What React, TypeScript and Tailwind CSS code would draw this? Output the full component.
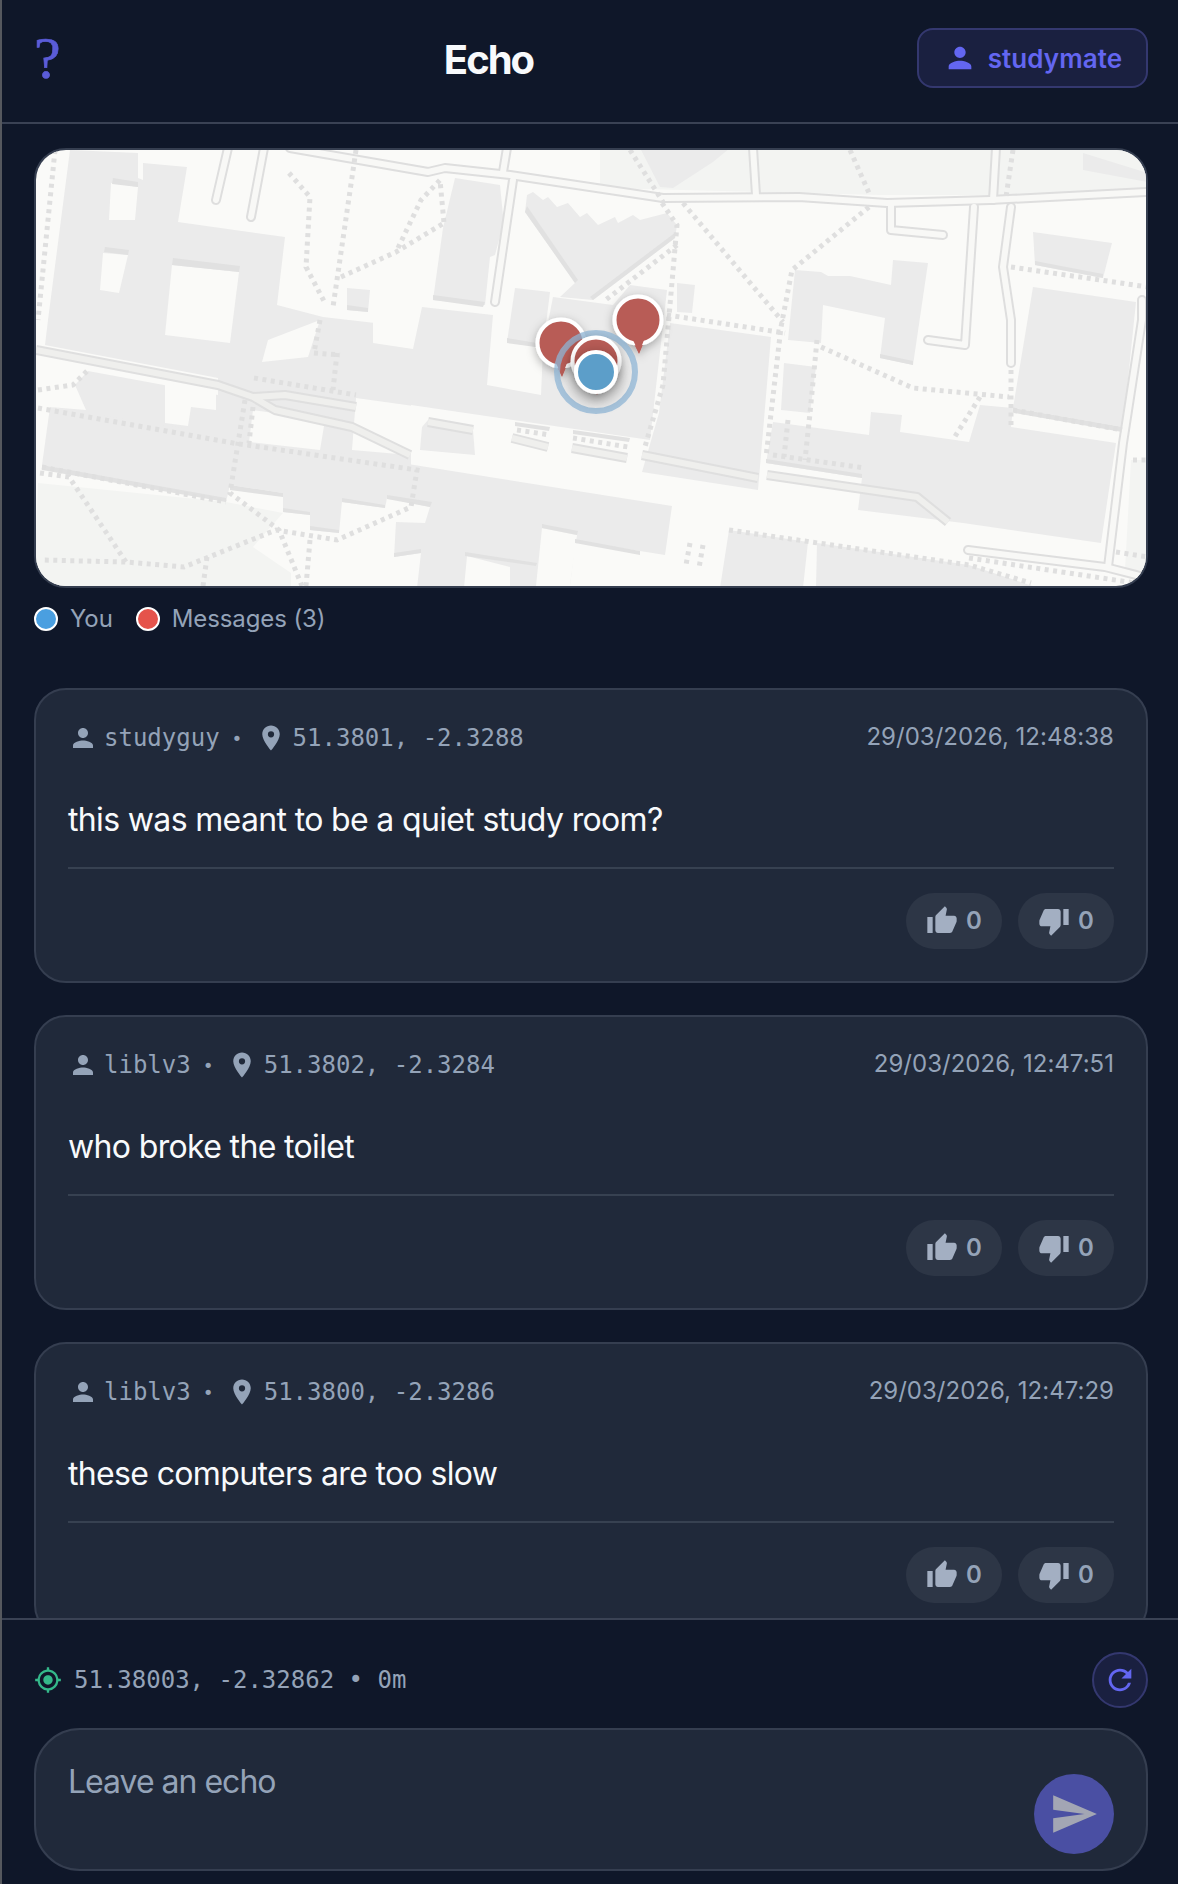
import React from "react";
import { MdPerson, MdLocationOn, MdThumbUp, MdThumbDown, MdMyLocation, MdRefresh, MdSend } from "react-icons/md";

const parks = [
  "38,483 226,502 283,513 253,547 291,573 291,588 34,588",
  "600,148 1148,148 1148,195 880,195 600,188",
  "1131,460 1148,460 1148,570 1125,570",
];
const buildings = [
  "70,150 138,153 138,178 143,180 143,163 187,167 178,222 285,237 277,305 323,317 375,323 373,343 413,349 422,307 493,315 487,385 541,395 543,348 553,297 613,305 630,285 667,290 650,440 411,405 411,468 218,440 218,378 45,345 48,320",
  "75,385 88,371 218,395 218,440 50,407 86,410",
  "50,407 672,506 665,555 577,541 570,586 510,588 510,567 467,556 464,588 417,588 421,553 394,557 396,522 425,523 430,507 387,498 385,508 342,502 339,533 310,530 310,515 283,512 283,493 230,485 226,502 42,465",
  "455,178 500,185 503,215 505,217 495,255 490,257 485,305 433,300 443,228",
  "527,195 533,192 543,200 548,197 557,207 568,203 580,217 587,213 598,225 615,217 618,223 633,215 640,220 667,213 677,225 675,238 593,300 560,297 575,283 525,212",
  "507,342 515,288 550,292 543,348",
  "347,288 370,290 368,312 347,310",
  "677,283 695,285 692,313 677,312",
  "640,148 730,148 713,162 673,188 660,187",
  "670,323 771,337 758,490 642,472 659,413",
  "795,270 821,272 828,276 850,276 891,285 893,260 928,263 913,365 880,358 885,318 823,305 821,343 788,340",
  "784,363 816,367 810,413 781,410",
  "773,422 869,435 871,412 902,415 900,432 969,442 980,405 1013,408 1011,427 1116,443 1101,543 963,523 858,510 862,478 766,463",
  "1033,287 1136,302 1123,427 1013,408",
  "1033,232 1112,243 1103,278 1035,265",
  "1083,153 1148,173 1148,182 1083,170",
  "729,530 808,542 803,588 720,588",
  "817,543 969,565 1039,588 816,588",
  "428,420 473,430 475,455 420,450 422,427",
];
const holes = [
  "111,183 138,187 135,220 109,220",
  "103,253 128,255 119,293 100,290",
  "172,265 239,272 230,343 165,335",
  "268,340 320,320 308,357 262,362",
  "373,320 417,322 411,348 373,342",
  "165,383 216,393 216,410 191,407 188,426 165,423",
  "253,410 325,420 320,450 249,442",
  "356,398 428,408 410,455 352,450",
  "86,355 218,382 218,388 90,364",
  "542,528 577,535 570,586 536,586",
  "575,543 640,555 635,588 570,588",
];
const strips = [
  "113,178 138,182 138,187 112,184",
  "105,247 129,250 128,255 104,252",
  "173,258 240,266 239,272 172,265",
  "433,295 485,302 483,307 433,300",
  "347,305 368,308 368,312 347,310",
  "507,338 543,344 543,348 507,343",
  "42,465 226,498 226,502 42,470",
  "230,485 283,493 283,497 230,490",
  "283,508 310,512 310,515 283,512",
  "310,526 339,530 339,533 310,530",
  "342,498 385,505 385,508 342,502",
  "387,495 432,502 430,507 387,499",
  "394,553 421,549 421,553 394,557",
  "465,552 537,563 536,566 465,556",
  "542,524 578,531 577,535 542,528",
  "575,539 640,551 640,555 575,543",
  "515,422 550,427 549,431 515,426",
  "573,430 630,438 629,442 573,434",
  "593,300 675,238 676,232 590,297",
  "525,212 575,283 578,280 527,206",
  "880,354 913,361 913,365 880,358",
  "1013,408 1123,427 1122,432 1014,413",
  "1035,261 1103,274 1103,278 1035,265",
  "766,459 862,474 862,478 766,463",
];
const roads = [
  "290,148 428,172 445,168 510,175 663,198 799,197 887,203 990,200 1148,192",
  "507,148 503,172",
  "513,180 495,302",
  "753,148 756,195",
  "996,148 993,200",
  "891,204 891,230 943,235",
  "974,207 965,345 928,340",
  "1011,207 1003,267 1011,320 1011,363",
  "1142,300 1142,320 1123,443 1108,567",
  "968,550 1105,567 1148,578",
  "228,148 216,200",
  "264,148 251,217",
];
const greyRoads = [
  "36,350 218,385 253,397 275,410 352,427 410,455",
  "253,397 285,395 356,407",
  "642,455 758,478",
  "767,475 917,497 948,522",
  "428,422 473,430",
  "512,438 548,447",
  "572,448 627,458",
];
const dots = [
  "55,150 38,320",
  "289,173 310,197 306,267 325,303",
  "356,150 333,307",
  "341,277 396,252 444,223",
  "398,248 421,200 440,180 444,223",
  "683,203 783,322",
  "662,203 677,225 663,385 644,450",
  "630,150 663,202",
  "677,245 603,302",
  "667,315 785,333",
  "850,150 869,193",
  "869,207 792,270 781,327 766,457",
  "817,340 810,413 805,460",
  "788,420 784,457",
  "773,455 865,468",
  "821,347 913,388 1009,397",
  "980,397 954,438",
  "1011,370 1011,427",
  "1013,410 1122,430",
  "1013,150 1006,197",
  "1011,267 1148,287",
  "729,530 866,550 969,565 1031,583",
  "969,558 1148,585",
  "1116,552 1148,557",
  "1133,460 1148,460",
  "38,408 233,443 417,470 411,507 337,540 276,530 184,567 126,562 42,560",
  "40,473 69,477 126,562",
  "245,400 230,493 279,530 302,586",
  "254,378 356,395",
  "337,353 333,390",
  "314,353 340,355",
  "320,320 314,353",
  "38,390 73,385 88,370",
  "310,540 306,586",
  "207,557 203,586",
  "42,467 226,502",
  "253,407 249,443",
  "690,543 686,565",
  "703,545 699,568",
  "517,430 550,435",
  "573,438 628,447",
];

function Pin({ x, y }: { x: number; y: number }) {
  return (
    <g filter="url(#pinShadow)">
      <path d={`M${x - 6} ${y + 20} L${x + 1} ${y + 34} L${x + 7} ${y + 20} Z`} fill="#b85c57" />
      <circle cx={x} cy={y} r={23.5} fill="#b85c57" stroke="#ffffff" strokeWidth={4} />
      <path d={`M${x - 5} ${y + 20} L${x + 1} ${y + 33} L${x + 6} ${y + 20} Z`} fill="#b85c57" />
    </g>
  );
}

function MapArt() {
  return (
    <svg viewBox="36 150 1110 436" preserveAspectRatio="none" className="block h-full w-full">
      <defs>
        <filter id="pinShadow" x="-60%" y="-60%" width="220%" height="220%">
          <feDropShadow dx="0" dy="3" stdDeviation="5" floodColor="#000000" floodOpacity="0.3" />
        </filter>
        <filter id="userShadow" x="-100%" y="-100%" width="300%" height="300%">
          <feDropShadow dx="0" dy="5" stdDeviation="8" floodColor="#000000" floodOpacity="0.45" />
        </filter>
      </defs>
      <rect x="30" y="140" width="1130" height="460" fill="#fafaf8" />
      {parks.map((p) => <polygon key={p} points={p} fill="#f3f4f2" />)}
      {buildings.map((p) => <polygon key={p} points={p} fill="#ebebeb" />)}
      {holes.map((p) => <polygon key={p} points={p} fill="#fafaf8" />)}
      {strips.map((p) => <polygon key={p} points={p} fill="#e1e1e1" />)}
      {greyRoads.map((p) => <polyline key={p} points={p} fill="none" stroke="#dfdfdf" strokeWidth={10} strokeLinejoin="round" />)}
      {greyRoads.map((p) => <polyline key={p + "i"} points={p} fill="none" stroke="#efefed" strokeWidth={6} strokeLinejoin="round" />)}
      {roads.map((p) => <polyline key={p} points={p} fill="none" stroke="#dedede" strokeWidth={10} strokeLinecap="round" strokeLinejoin="round" />)}
      {roads.map((p) => <polyline key={p + "i"} points={p} fill="none" stroke="#f8f8f6" strokeWidth={6} strokeLinecap="round" strokeLinejoin="round" />)}
      {dots.map((p) => <polyline key={p} points={p} fill="none" stroke="#dfdfdf" strokeWidth={5} strokeDasharray="4 4.5" />)}
      <Pin x={638} y={320} />
      <Pin x={561} y={343} />
      <circle cx={596} cy={372} r={39} fill="none" stroke="#8fb6d6" strokeOpacity={0.75} strokeWidth={6} />
      <Pin x={596} y={361} />
      <circle cx={596} cy={372} r={20} fill="#5b9ec9" stroke="#ffffff" strokeWidth={4} filter="url(#userShadow)" />
    </svg>
  );
}

const mono = "font-['DejaVu_Sans_Mono','Liberation_Mono',monospace]";

function Card({ user, lat, time, text, last }: { user: string; lat: string; time: string; text: string; last?: boolean }) {
  return (
    <div className={`h-[295px] shrink-0 rounded-[32px] border-2 border-[#353e50] bg-[#20293a] px-[32px] pt-[32px] ${last ? "" : "mb-[32px]"}`}>
      <div className="flex h-[30px] items-center justify-between text-[#94a3b8]">
        <div className={`flex items-center pt-[2px] text-[24px] ${mono}`}>
          <MdPerson className="mr-[6px] size-[30px]" />
          <span>{user}</span>
          <span className="ml-[12px] w-[11px] text-[18px]">•</span>
          <MdLocationOn className="ml-[13px] mr-[7px] size-[30px]" />
          <span>{lat}</span>
        </div>
        <span className="text-[24px] tracking-[0.02px]">{time}</span>
      </div>
      <p className="mt-[44px] h-[48px] text-[32px] leading-[48px] tracking-[-0.65px] text-[#f8fafc]">{text}</p>
      <div className="mt-[23px] flex justify-end gap-[16px] border-t-2 border-[#374151] pt-[24px]">
        <div className="flex h-[56px] w-[96px] items-center justify-center gap-[8px] rounded-full bg-[#2d3646] text-[24px] font-semibold text-[#94a3b8]">
          <MdThumbUp className="size-[32px] text-[#a3afc2]" />
          <span>0</span>
        </div>
        <div className="flex h-[56px] w-[96px] items-center justify-center gap-[8px] rounded-full bg-[#2d3646] text-[24px] font-semibold text-[#94a3b8]">
          <MdThumbDown className="size-[32px] text-[#a3afc2]" />
          <span>0</span>
        </div>
      </div>
    </div>
  );
}

export default function App() {
  return (
    <div className="flex h-[1884px] w-[1178px] flex-col overflow-hidden border-l-2 border-[#55585e] bg-[#0f1729] font-['Inter','Liberation_Sans',sans-serif]">
      <header className="flex h-[124px] shrink-0 items-center justify-between border-b-2 border-[#3a4254] pl-[32px] pr-[30px]">
        <span className="relative top-[-3px] w-[24px] font-['Liberation_Serif',serif] text-[60px] leading-none text-[#5a5cd8] [-webkit-text-stroke:0.7px_#5a5cd8]">?</span>
        <h1 className="relative left-[1px] top-[-1px] text-[40px] font-bold tracking-[-2px] text-[#f8fafc]">Echo</h1>
        <div className="flex h-[60px] w-[231px] -translate-y-[3px] items-center justify-center gap-[11px] rounded-[16px] border-2 border-[#34386f] bg-[#1a2040] text-[26px] font-semibold tracking-[0.1px] text-[#6366f1]">
          <MdPerson className="size-[34px]" />
          <span>studymate</span>
        </div>
      </header>
      <main className="min-h-0 flex-1 overflow-hidden pl-[32px] pr-[30px] pt-[24px]">
        <div className="h-[440px] overflow-hidden rounded-[32px] border-2 border-[#353e50]">
          <MapArt />
        </div>
        <div className="mb-[54px] mt-[16px] flex h-[30px] items-center text-[24px] tracking-[-0.1px] text-[#94a3b8]">
          <span className="mr-[12px] size-[24px] rounded-full border-2 border-white bg-[#4a9fe0]" />
          <span className="mr-[23px]">You</span>
          <span className="mr-[12px] size-[24px] rounded-full border-2 border-white bg-[#e5534b]" />
          <span>Messages (3)</span>
        </div>
        <Card user="studyguy" lat="51.3801, -2.3288" time="29/03/2026, 12:48:38" text="this was meant to be a quiet study room?" />
        <Card user="liblv3" lat="51.3802, -2.3284" time="29/03/2026, 12:47:51" text="who broke the toilet" />
        <Card user="liblv3" lat="51.3800, -2.3286" time="29/03/2026, 12:47:29" text="these computers are too slow" last />
      </main>
      <footer className="h-[266px] shrink-0 border-t-2 border-[#3a4254] pl-[32px] pr-[30px] pt-[32px]">
        <div className="flex h-[56px] items-center justify-between">
          <div className={`flex items-center gap-[12px] text-[24px] text-[#94a3b8] ${mono}`}>
            <MdMyLocation className="size-[28px] text-[#34b98a]" />
            <span>51.38003, -2.32862 • 0m</span>
          </div>
          <div className="flex size-[56px] items-center justify-center rounded-full border-2 border-[#34386f] bg-[#1a2040] text-[#6366f1]">
            <MdRefresh className="size-[34px]" />
          </div>
        </div>
        <div className="mt-[20px] flex h-[143px] justify-between rounded-[46px] border-2 border-[#353e50] bg-[#20293a] px-[32px]">
          <span className="mt-[28px] text-[32px] leading-[48px] tracking-[-1px] text-[#94a3b8]">Leave an echo</span>
          <div className="mt-[44px] flex size-[80px] items-center justify-center rounded-full bg-[#4a4fa3]">
            <MdSend className="size-[50px] text-[#a3a6b4]" />
          </div>
        </div>
      </footer>
    </div>
  );
}
